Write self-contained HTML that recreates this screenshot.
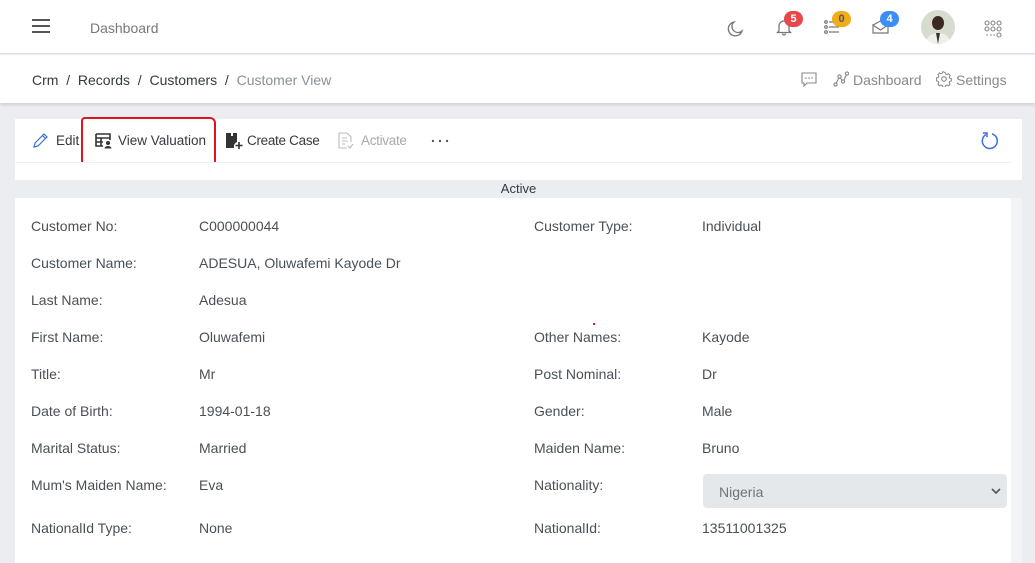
<!DOCTYPE html>
<html><head><style>
*{margin:0;padding:0;box-sizing:border-box}
body{width:1035px;height:563px;overflow:hidden;background:#ebedf0;font-family:"Liberation Sans",sans-serif;font-size:14px;color:#495057;position:relative}
.abs{position:absolute}
.hdr{left:0;top:0;width:1035px;height:54px;background:#fff;border-bottom:1px solid #dcdfe3}
.bc{left:0;top:55px;width:1035px;height:48px;background:#fff;box-shadow:0 2px 3px rgba(0,0,0,.12)}
.badge{position:absolute;width:19px;height:16px;border-radius:8px;color:#fff;font-size:11px;font-weight:bold;text-align:center;line-height:16px}
.card{left:15px;top:119px;width:1007px;height:444px;background:#fff}
.inner{left:15px;top:162px;width:996px;height:401px;background:#fff;border-top:1px solid #f0f1f3}
.lbl{position:absolute;font-size:14px;color:#495057}
.tb{position:absolute;top:133px;color:#343a40;font-size:13.5px}
</style></head><body>
<div class="abs hdr">
 <div class="abs" style="left:32px;top:19px;width:18px;height:2px;background:#555;box-shadow:0 6px 0 #555,0 12px 0 #555"></div>
 <div class="abs" style="left:90px;top:20px;color:#777;font-size:14px">Dashboard</div>
 <svg class="abs" style="left:726px;top:20px" width="18" height="18" viewBox="0 0 18 18"><path d="M8 2a7 7 0 1 0 8 9A6 6 0 0 1 8 2z" fill="none" stroke="#777" stroke-width="1.3"/></svg>
 <svg class="abs" style="left:776px;top:18px" width="16" height="18" viewBox="0 0 16 18"><path d="M3 13V8a5 5 0 0 1 10 0v5l1.5 1.5h-13zM6.5 15.5a1.5 1.5 0 0 0 3 0" fill="none" stroke="#777" stroke-width="1.3"/></svg>
 <div class="badge" style="left:784px;top:11px;background:#e5484d">5</div>
 <svg class="abs" style="left:824px;top:20px" width="16" height="14"><g fill="none" stroke="#777" stroke-width="1.2"><circle cx="2" cy="2" r="1.3"/><circle cx="2" cy="7" r="1.3"/><circle cx="2" cy="12" r="1.3"/><path d="M5 2h4M5 7h10M5 12h10"/></g></svg>
 <div class="badge" style="left:832px;top:11px;background:#f0ad1a;color:#555">0</div>
 <svg class="abs" style="left:872px;top:20px" width="17" height="14"><path d="M1 5v8h15V5L8.5 10z M1 5l7.5-4 7.5 4" fill="none" stroke="#777" stroke-width="1.2"/></svg>
 <div class="badge" style="left:880px;top:11px;background:#3a8ef6">4</div>
 <svg class="abs" style="left:921px;top:10px" width="34" height="34"><clipPath id="c"><circle cx="17" cy="17" r="17"/></clipPath><g clip-path="url(#c)"><rect width="34" height="34" fill="#d6dccf"/><path d="M4 34c2-9 8-11 13-11s11 2 13 11z" fill="#eef0ea"/><path d="M15 23l2 11 2-11z" fill="#333"/><ellipse cx="17" cy="13" rx="6" ry="7" fill="#3b2a22"/></g></svg>
 <svg class="abs" style="left:984px;top:20px" width="18" height="18"><g fill="none" stroke="#888" stroke-width="1.1"><circle cx="3" cy="3" r="2"/><circle cx="9" cy="3" r="2"/><circle cx="15" cy="3" r="2"/><circle cx="3" cy="9" r="2"/><circle cx="9" cy="9" r="2"/><circle cx="15" cy="9" r="2"/><circle cx="15" cy="15" r="2"/></g><g fill="#888"><circle cx="3" cy="15" r=".8"/><circle cx="7" cy="15" r=".8"/><circle cx="10" cy="15" r=".8"/></g></svg>
</div>
<div class="abs bc">
 <div class="abs" style="left:32px;top:17px;color:#343a40">Crm &nbsp;/&nbsp; Records &nbsp;/&nbsp; Customers &nbsp;/&nbsp; <span style="color:#8a9099">Customer View</span></div>
 <svg class="abs" style="left:801px;top:17px" width="16" height="15"><path d="M1 1h14v10H6l-3 3v-3H1z" fill="none" stroke="#888" stroke-width="1.1"/><g fill="#888"><circle cx="5" cy="6" r=".8"/><circle cx="8" cy="6" r=".8"/><circle cx="11" cy="6" r=".8"/></g></svg>
 <svg class="abs" style="left:833px;top:16px" width="16" height="16"><g fill="none" stroke="#888" stroke-width="1.1"><circle cx="2.5" cy="13.5" r="1.6"/><circle cx="6.5" cy="5.5" r="1.6"/><circle cx="10" cy="10.5" r="1.6"/><circle cx="14" cy="2.5" r="1.6"/><path d="M3.3 12l2.5-5M7.4 7l1.7 2.2M10.8 9l2.6-5"/></g></svg>
 <div class="abs" style="left:853px;top:17px;color:#888">Dashboard</div>
 <svg class="abs" style="left:936px;top:16px" width="16" height="16" viewBox="0 0 16 16"><circle cx="8" cy="8" r="2.3" fill="none" stroke="#888" stroke-width="1.1"/><path d="M8 1.2l1.2.2.4 1.6 1.4.6 1.4-.9 1.7 1.7-.9 1.4.6 1.4 1.6.4v2.4l-1.6.4-.6 1.4.9 1.4-1.7 1.7-1.4-.9-1.4.6-.4 1.6H6.8l-.4-1.6-1.4-.6-1.4.9-1.7-1.7.9-1.4-.6-1.4-1.6-.4V6.8l1.6-.4.6-1.4-.9-1.4 1.7-1.7 1.4.9 1.4-.6.4-1.6z" fill="none" stroke="#888" stroke-width="1"/></svg>
 <div class="abs" style="left:956px;top:17px;color:#888">Settings</div>
</div>
<div class="abs card"></div>
<svg class="abs" style="left:32px;top:132px" width="17" height="17"><path d="M2 15l1-4L12 2l3 3-9 9zM10.5 3.5l3 3" fill="none" stroke="#3a6fd8" stroke-width="1.2"/></svg>
<div class="tb" style="left:56px">Edit</div>
<svg class="abs" style="left:95px;top:133px" width="18" height="16"><path d="M1 1h14v6M1 1v12h7M1 5h14M6 5v8M1 9h7" fill="none" stroke="#333" stroke-width="1.6"/><circle cx="13" cy="10" r="2" fill="#333"/><path d="M9.5 15.5a3.5 2.5 0 0 1 7 0z" fill="#333"/></svg>
<div class="tb" style="left:118px">View Valuation</div>
<div class="abs" style="left:81px;top:117px;width:135px;height:49px;border:2px solid #e0141e;border-radius:4px 6px 5px 4px"></div>
<svg class="abs" style="left:225px;top:132px" width="18" height="18"><path d="M1 1h5v3h2V1h4v9a5 5 0 0 0-3 6H1z" fill="#333"/><path d="M14 10v7M10.5 13.5h7" stroke="#333" stroke-width="1.6"/></svg>
<div class="tb" style="left:247px;letter-spacing:-0.3px">Create Case</div>
<svg class="abs" style="left:338px;top:132px" width="16" height="17"><path d="M1 1h8l4 4v5M1 1v15h8M4 6h5M4 9h6M4 12h3M10 14l2 2 3-4" fill="none" stroke="#bbb" stroke-width="1.1"/></svg>
<div class="tb" style="left:361px;color:#aaa;letter-spacing:-0.3px">Activate</div>
<svg class="abs" style="left:431px;top:139px" width="18" height="4"><g fill="#555"><circle cx="2" cy="2" r="1.2"/><circle cx="9" cy="2" r="1.2"/><circle cx="16" cy="2" r="1.2"/></g></svg>
<svg class="abs" style="left:980px;top:131px" width="20" height="20"><path d="M6 3.5A7.5 7.5 0 1 0 12 2.8" fill="none" stroke="#3a6fd8" stroke-width="1.5"/><path d="M3 2h4v4" fill="none" stroke="#3a6fd8" stroke-width="1.5"/></svg>
<div class="abs inner"></div>
<div class="abs" style="left:15px;top:180px;width:1007px;height:18px;background:#ebeef1;text-align:center;line-height:18px;color:#343a40;font-size:13px">Active</div>
<div class="abs" style="left:1011px;top:198px;width:11px;height:365px;background:#f2f3f5"></div>
<div class="abs" style="left:593px;top:323px;width:2px;height:2px;background:#e0141e"></div>

<div class="lbl" style="left:31px;top:218px">Customer No:</div><div class="lbl" style="left:199px;top:218px">C000000044</div>
<div class="lbl" style="left:534px;top:218px">Customer Type:</div><div class="lbl" style="left:702px;top:218px">Individual</div>
<div class="lbl" style="left:31px;top:255px">Customer Name:</div><div class="lbl" style="left:199px;top:255px">ADESUA, Oluwafemi Kayode Dr</div>
<div class="lbl" style="left:31px;top:292px">Last Name:</div><div class="lbl" style="left:199px;top:292px">Adesua</div>
<div class="lbl" style="left:31px;top:329px">First Name:</div><div class="lbl" style="left:199px;top:329px">Oluwafemi</div>
<div class="lbl" style="left:534px;top:329px">Other Names:</div><div class="lbl" style="left:702px;top:329px">Kayode</div>
<div class="lbl" style="left:31px;top:366px">Title:</div><div class="lbl" style="left:199px;top:366px">Mr</div>
<div class="lbl" style="left:534px;top:366px">Post Nominal:</div><div class="lbl" style="left:702px;top:366px">Dr</div>
<div class="lbl" style="left:31px;top:403px">Date of Birth:</div><div class="lbl" style="left:199px;top:403px">1994-01-18</div>
<div class="lbl" style="left:534px;top:403px">Gender:</div><div class="lbl" style="left:702px;top:403px">Male</div>
<div class="lbl" style="left:31px;top:440px">Marital Status:</div><div class="lbl" style="left:199px;top:440px">Married</div>
<div class="lbl" style="left:534px;top:440px">Maiden Name:</div><div class="lbl" style="left:702px;top:440px">Bruno</div>
<div class="lbl" style="left:31px;top:477px">Mum's Maiden Name:</div><div class="lbl" style="left:199px;top:477px">Eva</div>
<div class="lbl" style="left:534px;top:477px">Nationality:</div>
<div class="abs" style="left:703px;top:474px;width:304px;height:34px;background:#e5e8eb;border-radius:4px"><div class="abs" style="left:16px;top:10px;color:#6c757d">Nigeria</div>
<svg class="abs" style="left:288px;top:13px" width="10" height="8"><path d="M1 2l4 4 4-4" fill="none" stroke="#555" stroke-width="1.6"/></svg></div>
<div class="lbl" style="left:31px;top:520px">NationalId Type:</div><div class="lbl" style="left:199px;top:520px">None</div>
<div class="lbl" style="left:534px;top:520px">NationalId:</div><div class="lbl" style="left:702px;top:520px">13511001325</div>
</body></html>
